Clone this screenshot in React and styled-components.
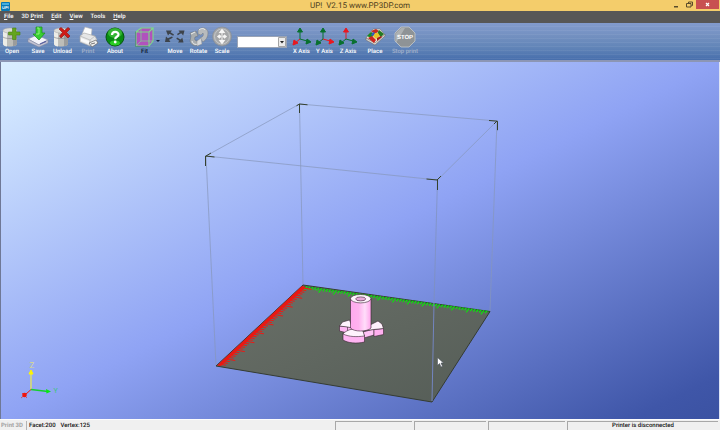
import React from "react";
import styled, { createGlobalStyle } from "styled-components";

const GlobalStyle = createGlobalStyle`
  * { box-sizing: border-box; }
  html, body { margin: 0; height: 100%; }
  body { font-family: Roboto, "Open Sans", sans-serif; text-rendering: geometricPrecision; overflow: hidden; }
  button, select { font: inherit; color: inherit; text-rendering: inherit; padding: 0; margin: 0; border: 0; background: none; }
`;

const Window = styled.div`
  display: flex;
  flex-direction: column;
  height: 100vh;
  background: #f0f0f0;
`;

const TitleBar = styled.header`
  display: grid;
  grid-template-columns: 70px 1fr 70px;
  height: 11px;
  flex: none;
  background: #f4cd6b;
`;

const AppLogo = styled.span`
  display: flex;
  align-items: center;
  padding-left: 1px;
  svg { width: 9px; height: 9px; }
`;

const Title = styled.h1`
  margin: 0;
  font-size: 8px;
  line-height: 12px;
  font-weight: 400;
  text-align: center;
  white-space: pre;
  color: #493c1c;
`;

const WindowControls = styled.div`
  display: flex;
  justify-content: flex-end;
  align-items: flex-start;
  padding-right: 1px;
`;

const WindowButton = styled.button`
  display: flex;
  align-items: center;
  justify-content: center;
  width: ${(p) => (p.$close ? 23 : 13)}px;
  height: 9px;
  background: ${(p) => (p.$close ? "#c85051" : "none")};
  svg { width: 7px; height: 7px; }
`;

const MenuBar = styled.nav`
  display: flex;
  gap: 8px;
  height: 12px;
  flex: none;
  padding-left: 4px;
  background: #575757;
  color: #fff;
`;

const MenuItem = styled.button`
  font-size: 6px;
  line-height: 12px;
  font-weight: 500;
  white-space: nowrap;
`;

const ToolBar = styled.div`
  display: flex;
  align-items: flex-start;
  height: 39px;
  flex: none;
  padding-top: 3px;
  border-bottom: 2px solid #8c96b4;
  background:
    repeating-linear-gradient(transparent 0 3px, rgba(255, 255, 255, 0.06) 3px 4px),
    linear-gradient(#829bce, #7390c0 35%, #6285b8 65%, #476eac);
`;

const ToolButton = styled.button`
  display: flex;
  flex-direction: column;
  align-items: center;
  flex: none;
  width: ${(p) => p.$width}px;
  font-size: 6px;
  line-height: 7px;
  font-weight: 500;
  white-space: nowrap;
  color: ${(p) => p.$color || "#fff"};
  svg { width: 20px; height: 22px; flex: none; overflow: visible; }
`;

const DropButton = styled.button`
  width: 5px;
  height: 30px;
  svg { display: block; width: 4px; height: 3px; }
`;

const Spacer = styled.span`
  width: ${(p) => p.$width}px;
  flex: none;
`;

const Combo = styled.div`
  position: relative;
  width: 50px;
  height: 12px;
  margin-top: 10px;
  background: #fff;
  border: 1px solid #9aa4b6;
  flex: none;
  select { display: block; width: 100%; height: 100%; appearance: none; color: #222; font-size: 7px; }
  svg { position: absolute; right: 0; top: 0; width: 8px; height: 10px; pointer-events: none; }
`;

const Viewport = styled.main`
  flex: 1;
  min-height: 0;
  border-left: 1px solid #6f7896;
  border-right: 1px solid #dfe5f6;
  background: linear-gradient(to bottom right, #d9eeff 0%, #d2e7ff 6%, #8fa3f4 50%, #3f56a8 94%, #3b52a2 100%);
  svg { display: block; width: 100%; height: 100%; }
`;

const StatusBar = styled.footer`
  display: grid;
  grid-template-columns: 27px 308fr 79fr 74fr 79fr 153fr;
  height: 11px;
  flex: none;
  padding-top: 1px;
  border-top: 1px solid #fdfdfd;
  background: #f0f0f0;
  color: #111;
  font-size: 6px;
  line-height: 9px;
  white-space: nowrap;
`;

const StatusMode = styled.span`
  padding-left: 1px;
  font-weight: 700;
  color: #a3a3a3;
  border-right: 1px solid #b4b4b4;
`;

const StatusInfo = styled.span`
  display: flex;
  gap: 5px;
  padding-left: 2px;
  font-weight: 500;
`;

const StatusPane = styled.span`
  margin-right: 2px;
  border-top: 1px solid #a8a8a8;
  border-left: 1px solid #a8a8a8;
  text-align: center;
  font-weight: 500;
  line-height: 8px;
`;

const Icon = ({ children, ...rest }) => (
  <svg viewBox="0 0 20 22" aria-hidden="true" {...rest}>{children}</svg>
);

const Cylinder = () => (
  <g>
    <path d="M1 5v13c0 3.300 14 3.300 14 0V5z" fill="#bdbdb8" />
    <path d="M1 5v13c0 1.500 2 2.200 4 2.400V6z" fill="#ecece7" />
    <path d="M11 6v14.200c2.500-.4 4-1 4-2.200V5z" fill="#9b9c9c" />
    <path d="M1 11c2 2 12 2 14 0" fill="none" stroke="#888" strokeWidth=".7" />
    <ellipse cx="8" cy="4.500" rx="7" ry="2.600" fill="#dcdcd8" stroke="#a0a0a0" strokeWidth=".5" />
  </g>
);

const OpenIcon = () => (
  <Icon>
    <Cylinder />
    <path d="M10.500 2h3.500v4h4v3h-4v4.500h-3.500V9h-4V6h4z" fill="#64a51e" stroke="#4a8014" strokeWidth=".6" />
  </Icon>
);

const SaveIcon = () => (
  <Icon>
    <path d="M0 13l9-4 11 5-9 5z" fill="#f3f3fa" stroke="#8d91a8" strokeWidth=".6" />
    <path d="M0 13v3l11 5 9-4v-3l-9 5z" fill="#c2c3d2" stroke="#7e819a" strokeWidth=".5" />
    <path d="M12 18l6-2.600" stroke="#5960a0" strokeWidth="1.200" />
    <path d="M8 1h6v6h3l-6 7-6-6h3z" fill="#39cf32" stroke="#198b1d" strokeWidth=".7" />
    <path d="M9 2h2v6H8" fill="none" stroke="#96f57a" />
  </Icon>
);

const UnloadIcon = () => (
  <Icon>
    <Cylinder />
    <path d="M8 1.500l3.500 3 3.500-3 2 1.500-3.500 3.500L17 10l-2 2-3.500-3.500L8 12 6.500 10 9.500 6.500 6 3z" fill="#cf1c17" stroke="#8d100c" strokeWidth=".6" />
  </Icon>
);

const PrintIcon = () => (
  <Icon>
    <path d="M4 8l3-7 7 2-1 9z" fill="#fcfcfc" stroke="#b2b2b2" strokeWidth=".6" />
    <path d="M2 10l4-3 11 3 2 4-7 6-10-4z" fill="#e6e6e6" stroke="#a3a3a3" strokeWidth=".6" />
    <path d="M2 10l10 4 5-4M12 14v6" fill="none" stroke="#aaa" strokeWidth=".6" />
    <path d="M3 12l8 3v3l-8-3z" fill="#fafafa" />
    <path d="M11 17l7-3 2 3-6 4z" fill="#eee" stroke="#666" strokeWidth=".7" />
    <path d="M13 18l4-1" stroke="#777" />
  </Icon>
);

const AboutIcon = () => (
  <Icon>
    <circle cx="10" cy="11" r="9" fill="#088c12" stroke="#06540f" />
    <ellipse cx="10" cy="7" rx="7" ry="5" fill="#4ccb45" opacity=".65" />
    <ellipse cx="10" cy="17" rx="5" ry="2.500" fill="#33dd2b" opacity=".8" />
    <path d="M7 9c0-4 6.500-4 6.500-.5 0 2.300-3.300 2.200-3.300 4.700" fill="none" stroke="#fff" strokeWidth="2.200" />
    <circle cx="10.200" cy="16" r="1.400" fill="#fff" />
  </Icon>
);

const FitIcon = () => (
  <Icon>
    <path d="M1 6l5-4h12v13l-4 5H1z" fill="#b052bd" />
    <path d="M6 2v13h12M1 20l5-5" fill="none" stroke="#84c796" strokeWidth=".8" />
    <path d="M1 6h13v14H1zM1 6l5-4h12l-4 4M18 2v13l-4 5" fill="none" stroke="#7ddb88" strokeWidth="1.100" />
    <path d="M.5 5.500v15h13" fill="none" stroke="#396d5f" strokeWidth=".5" />
  </Icon>
);

const MoveIcon = () => (
  <Icon>
    <g fill="#3d434b">
      <path d="M1 4.500h6L5.500 6.300 9 8.500l-.8 1.200-3.700-2L3 9.500z" />
      <path d="M19.500 4.500h-6l1.300 1.700L12 8l.8 1.200 3.400-1.900 2 2.200z" />
      <path d="M0 16l1-5.500 1.800 1.800L7 10.500l.8 1.200L4 13.700 5.500 16z" />
      <path d="M18.500 16.500h-5.500l1.300-1.700-3-2 .8-1.300 3.400 2 1.800-1.700z" />
    </g>
  </Icon>
);

const RotateIcon = () => (
  <Icon>
    <path d="M9 4c4-4 10-2 10 3 0 4-2 7-5 9l-3-4c3-1 4-3 3-5l-2 2-3-1z" fill="#b8bbbd" stroke="#727980" strokeWidth=".5" />
    <path d="M1 7l6-2 2 5-3 1c-1 2 0 4 2 4l3-1-1 5c-4 2-8 0-9-4l1-5z" fill="#a9adaf" stroke="#697178" strokeWidth=".5" />
    <path d="M10 4c2-2 5-2 6 0M2 8l4-2M3 15c1 3 3 4 6 3" fill="none" stroke="#eceeee" />
    <path d="M8 15l4-3 1 6-5 2z" fill="#d7d9da" stroke="#888" strokeWidth=".4" />
  </Icon>
);

const ScaleIcon = () => (
  <Icon>
    <circle cx="10" cy="10.500" r="9.500" fill="#a5a7a9" stroke="#858a90" strokeWidth=".6" />
    <circle cx="10" cy="10.500" r="7.500" fill="none" stroke="#c7c9ca" />
    <path d="M10 2l4 5.500h-3v2l1.500-1.500 3 2.500-3 2.500L11 11.500v2h3L10 19l-4-5.500h3v-2L7.500 13l-3-2.500 3-2.500L9 9.500v-2H6z" fill="#f6f6f6" stroke="#888" strokeWidth=".4" />
    <path d="M10 7v7" stroke="#aaa" strokeWidth=".7" />
  </Icon>
);

const GREEN = "#08702e";
const RED = "#e81820";

const AxisIcon = ({ active }) => {
  const color = (axis) => (axis === active ? RED : GREEN);
  return (
    <Icon>
      <g stroke={color("z")} fill={color("z")}><path d="M8 13V5" /><path d="M8 2l2.500 4h-5z" /></g>
      <g stroke={color("y")} fill={color("y")}><path d="M8 13l7 2" /><path d="M19 16l-5 2 1-5z" /></g>
      <g stroke={color("x")} fill={color("x")}><path d="M8 13l-5 4" /><path d="M1 19l1-5 4 3z" /></g>
    </Icon>
  );
};

const PlaceIcon = () => (
  <Icon>
    <path d="M1 12L8 3h7l5 6-10 9z" fill="#e4dfd6" stroke="#6c6560" strokeWidth=".5" />
    <path d="M1 12v2l9 5 10-9V8l-10 9z" fill="#dcd8d2" stroke="#665f5b" strokeWidth=".5" />
    <path d="M2 10l4-4 4 2-4 4z" fill="#188728" />
    <path d="M6 5l5-2 3 2-4 3z" fill="#c22a23" />
    <path d="M14 4l5 4-3 3-4-3z" fill="#247923" />
    <path d="M10 7h3l2 3-4 3-3-3z" fill="#e8c229" />
    <path d="M3 12l4-2 4 4-2 3z" fill="#cc251e" />
    <path d="M12 12l4-2 1 1-5 4z" fill="#a51a17" />
    <path d="M8 6l2 1-2 3-2-1z" fill="#315cc1" />
  </Icon>
);

const StopIcon = () => (
  <Icon>
    <path d="M6 1h8l6 6v8l-6 6H6l-6-6V7z" fill="#8e9396" stroke="#c4c8ca" strokeWidth=".8" />
    <path d="M1 7l5-5h4L1 17z" fill="#c1c4c6" opacity=".6" />
    <text x="10" y="13.200" textAnchor="middle" fontFamily="Liberation Sans" fontSize="6" fontWeight="700" fill="#fff">STOP</text>
  </Icon>
);

const ORIGIN = [304, 286];
const RED_END = [218, 366];
const GREEN_END = [490, 311];

const between = ([ax, ay], [bx, by], t) => [ax + (bx - ax) * t, ay + (by - ay) * t];

const ticks = (end, count, length) =>
  Array.from({ length: count }, (_, i) => {
    const [x, y] = between(ORIGIN, end, (i + 1) / (count + 1));
    const size = i % 5 === 0 ? 1.6 : 1;
    return `M${x} ${y}l${length[0] * size} ${length[1] * size}`;
  }).join("");

const Model = () => (
  <g stroke="#35242f" strokeWidth=".6" strokeLinejoin="round">
    <path d="M339.500 326v5l8 2 4-2v-4z" fill="#ffb6f4" />
    <path d="M339.500 326l3-4 7-2 3 8-5-1z" fill="#fff2fd" />
    <path d="M347.500 327v6" />
    <path d="M363 332l11-3v6l-10 3z" fill="#ffc3f5" />
    <path d="M374 329.500l9.500-1v6l-9.500 2z" fill="#ffafef" />
    <path d="M370 325l8-4 4 3 1.500 4.500-9.500 1-8 1z" fill="#fff2fd" />
    <path d="M343 333v7c5 3 13 4 21.500 2v-7z" fill="#ffb4f2" />
    <path d="M343 334c4-5 14-7 20-3l1.500 5c-8 1-15 1-21.500-2z" fill="#fff2fd" />
    <path d="M350.500 299v29c3 4 17 4 20.500 0v-29z" fill="url(#tube)" />
    <ellipse cx="360.700" cy="298.700" rx="10.200" ry="4.200" fill="#fff4fd" />
    <ellipse cx="360.700" cy="298.900" rx="5" ry="2" fill="#e8a9da" />
  </g>
);

const CORNERS = [
  "M299.500 113v-9l8 .8M299.500 104l-3 1.800",
  "M489 120.500l8.500 .7v9M497 121l-3 3",
  "M426.500 179l11 1v10M437 180l4-4",
  "M205.500 166v-10l9 1M206 156l5-3",
];

const Scene = () => (
  <svg viewBox="1 62 718 357" preserveAspectRatio="none" role="img" aria-label="Build volume with model">
    <defs>
      <linearGradient id="tube">
        <stop offset="0" stopColor="#ffa9ee" />
        <stop offset=".4" stopColor="#ffb2ef" />
        <stop offset=".7" stopColor="#ffddfa" />
        <stop offset="1" stopColor="#ffa5eb" />
      </linearGradient>
      <linearGradient id="plate" x1="0" y1="0" x2="1" y2="1">
        <stop offset="0" stopColor="#6a7068" />
        <stop offset="1" stopColor="#555d57" />
      </linearGradient>
    </defs>
    <g fill="none" stroke="#8796ba" strokeWidth=".7">
      <path d="M299.500 104L497 121l-59.500 59L206 156z" />
      <path d="M299.500 104l3.500 181M497 121l-7 190M206 156l10 210" />
    </g>
    <path d="M303 285l187 26.500L432 402l-216-36z" fill="url(#plate)" stroke="#343b32" />
    <path d="M304 286.500L489 312" stroke="#27832a" strokeWidth="1.200" />
    <path d={ticks(GREEN_END, 62, [-2, 2.6])} stroke="#10dd10" strokeWidth="1.200" />
    <path d="M302 286l4 1-85 79-4-.5z" fill="#e81712" />
    <path d={ticks(RED_END, 44, [6, 1])} stroke="#f01712" strokeWidth="1" />
    <path d="M437.500 180L434 303" stroke="#8090b9" strokeWidth=".7" />
    <path d="M434 303l-2 98" stroke="#7385c0" />
    <path d={CORNERS.join("")} fill="none" stroke="#35412f" />
    <Model />
    <path d="M437.500 357.500v8l2-2 1.500 3.500 1.500-.7-1.500-3.300h2.500z" fill="#fff" stroke="#3c4552" strokeWidth=".5" />
    <g fill="none">
      <path d="M31 389.500V372" stroke="#d8dc72" strokeWidth="1.600" />
      <path d="M31 370l2 4h-4z" fill="#fff500" stroke="#fff500" />
      <path d="M31 389.500l17 2" stroke="#15cf2e" strokeWidth="1.300" />
      <path d="M46 389l5 2.500-4.500 2z" fill="#08e911" />
      <path d="M31 389.500l-6 5.500" stroke="#ee1710" />
      <circle cx="24.500" cy="395" r="2.300" fill="#f31208" />
      <path d="M21 398l6-5M22 393l5 5" stroke="#ee1710" strokeWidth=".6" />
    </g>
    <text x="32" y="367.500" textAnchor="middle" fontFamily="Roboto" fontSize="8" fill="#d8da8c">Z</text>
    <text x="55.500" y="393" textAnchor="middle" fontFamily="Roboto" fontSize="7" fill="#3fc47b">Y</text>
  </svg>
);

const MENUS = [
  ["", "F", "ile"],
  ["3D ", "P", "rint"],
  ["", "E", "dit"],
  ["", "V", "iew"],
  ["Tools", "", ""],
  ["", "H", "elp"],
];

const Tool = ({ label, width, icon, color, disabled }) => (
  <ToolButton type="button" $width={width} $color={color} disabled={disabled}>
    {icon}
    {label}
  </ToolButton>
);

export default function App() {
  return (
    <Window>
      <GlobalStyle />
      <TitleBar>
        <AppLogo>
          <svg viewBox="0 0 9 9" aria-hidden="true">
            <rect width="9" height="9" rx="1" fill="#0879b6" />
            <path d="M1 1h7v2H1z" fill="#48aedb" />
            <text x="4.500" y="6.500" textAnchor="middle" fontFamily="Liberation Sans" fontWeight="700" fontSize="4" fill="#fff">UP!</text>
          </svg>
        </AppLogo>
        <Title>{"UP!  V2.15 www.PP3DP.com"}</Title>
        <WindowControls>
          <WindowButton type="button" aria-label="Minimize">
            <svg viewBox="0 0 7 7"><path d="M1 5h4v1.500H1z" fill="#594b2a" /></svg>
          </WindowButton>
          <WindowButton type="button" aria-label="Restore">
            <svg viewBox="0 0 7 7"><path d="M2.500 2V1h4v3.500h-1M.5 2.500h4.500V6H.5z" fill="none" stroke="#594b2a" /></svg>
          </WindowButton>
          <WindowButton type="button" aria-label="Close" $close>
            <svg viewBox="0 0 7 7"><path d="M2 2l3 3M5 2L2 5" stroke="#fff" strokeWidth="1.200" /></svg>
          </WindowButton>
        </WindowControls>
      </TitleBar>
      <MenuBar>
        {MENUS.map(([before, key, after]) => (
          <MenuItem key={before + key} type="button">{before}<u>{key}</u>{after}</MenuItem>
        ))}
      </MenuBar>
      <ToolBar role="toolbar">
        <Tool label="Open" width={24} icon={<OpenIcon />} />
        <Tool label="Save" width={28} icon={<SaveIcon />} />
        <Tool label="Unload" width={21} icon={<UnloadIcon />} />
        <Tool label="Print" width={30} icon={<PrintIcon />} color="#a3b1cb" disabled />
        <Tool label="About" width={24} icon={<AboutIcon />} />
        <Spacer $width={6} />
        <Tool label="Fit" width={23} icon={<FitIcon />} color="#0c1428" />
        <DropButton type="button" aria-label="Fit options">
          <svg viewBox="0 0 4 3"><path d="M0 0h4L2 2z" fill="#15213c" /></svg>
        </DropButton>
        <Spacer $width={2} />
        <Tool label="Move" width={24} icon={<MoveIcon />} />
        <Tool label="Rotate" width={23} icon={<RotateIcon />} />
        <Tool label="Scale" width={24} icon={<ScaleIcon />} />
        <Spacer $width={3} />
        <Combo>
          <select aria-label="Value" defaultValue=""><option value="" /></select>
          <svg viewBox="0 0 8 10" aria-hidden="true">
            <path d="M.5.500h7v9h-7z" fill="#ececec" stroke="#a5a5a5" />
            <path d="M2 4h4L4 6.500z" fill="#222" />
          </svg>
        </Combo>
        <Spacer $width={3} />
        <Tool label="X Axis" width={23} icon={<AxisIcon active="x" />} />
        <Tool label="Y Axis" width={23} icon={<AxisIcon active="y" />} />
        <Tool label="Z Axis" width={24} icon={<AxisIcon active="z" />} />
        <Spacer $width={3} />
        <Tool label="Place" width={24} icon={<PlaceIcon />} />
        <Spacer $width={3} />
        <Tool label="Stop print" width={30} icon={<StopIcon />} color="#a3b1cb" disabled />
      </ToolBar>
      <Viewport><Scene /></Viewport>
      <StatusBar>
        <StatusMode>Print 3D</StatusMode>
        <StatusInfo><span>Facet:200</span><span>Vertex:125</span></StatusInfo>
        <StatusPane />
        <StatusPane />
        <StatusPane />
        <StatusPane>Printer is disconnected</StatusPane>
      </StatusBar>
    </Window>
  );
}
